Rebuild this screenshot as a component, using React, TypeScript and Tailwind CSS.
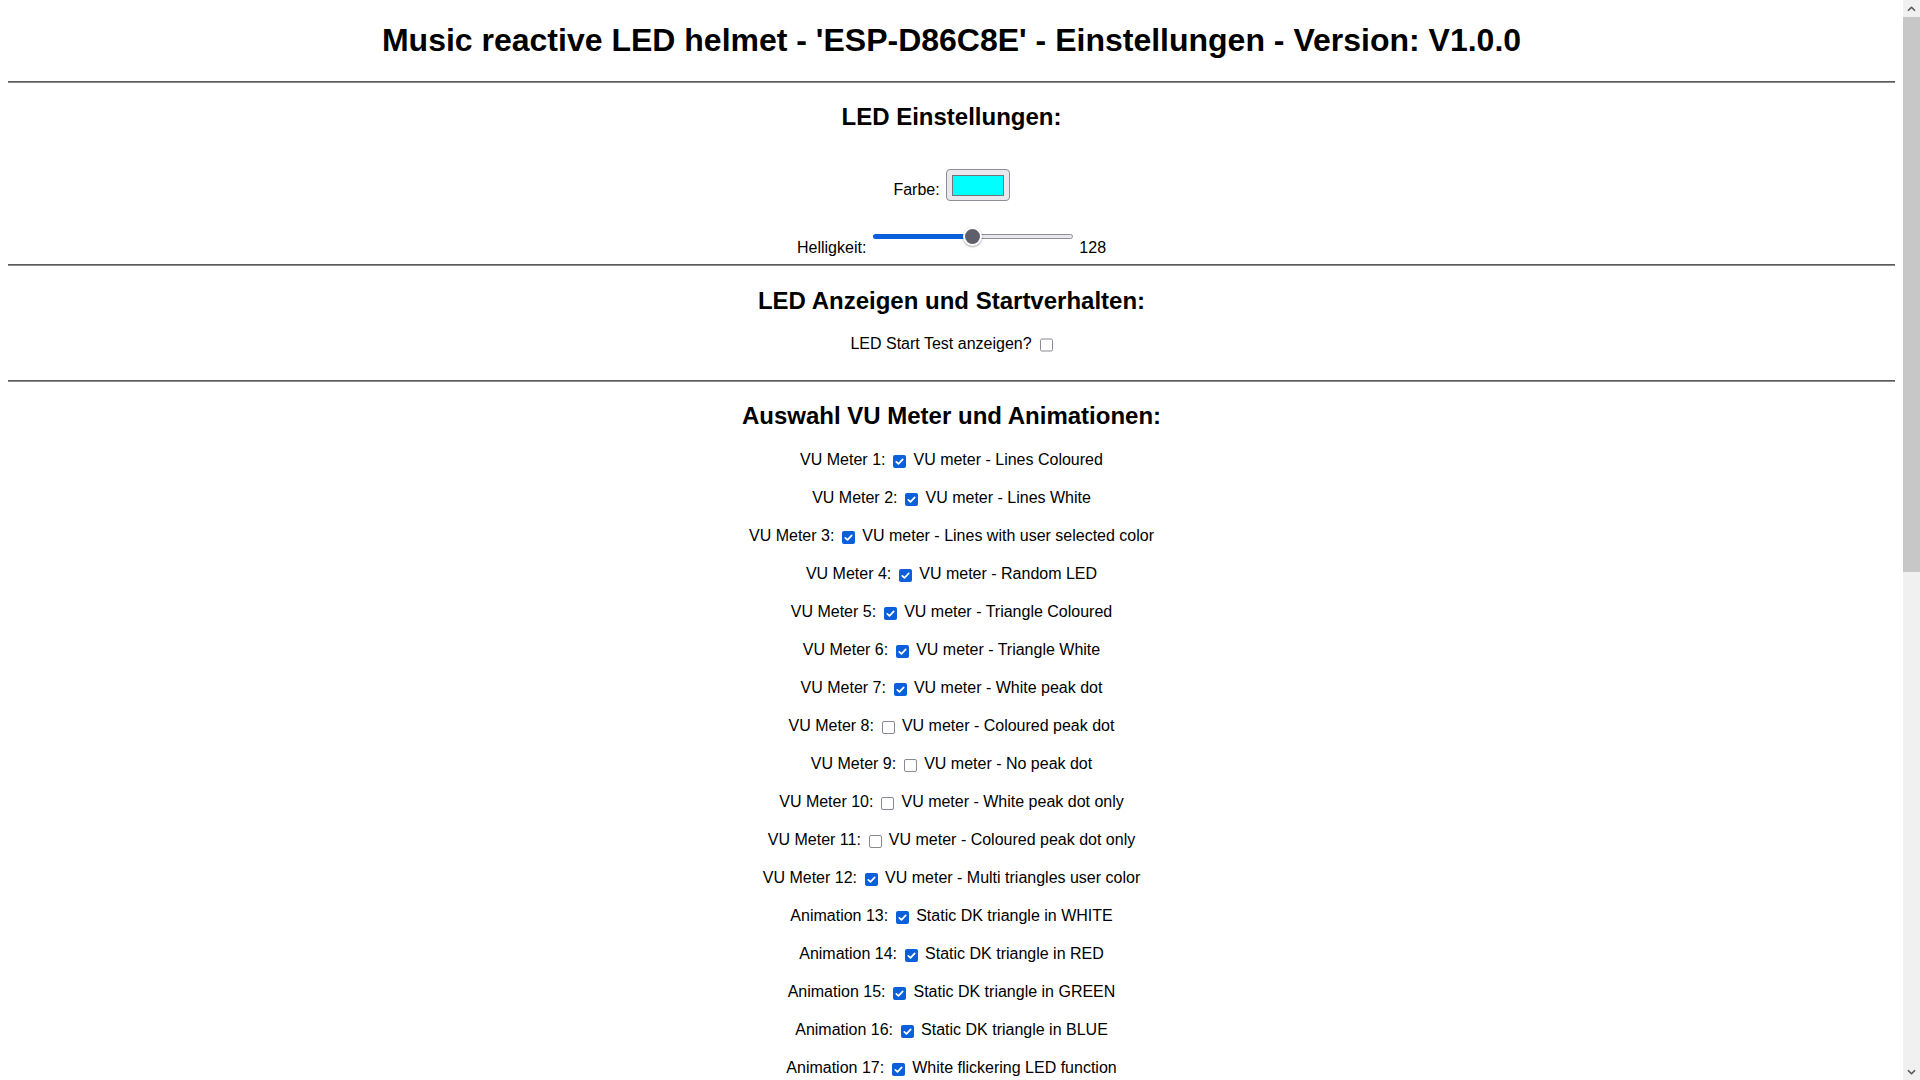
const vuRows: { label: string; checked: boolean; text: string }[] = [
  { label: "VU Meter 1:", checked: true, text: "VU meter - Lines Coloured" },
  { label: "VU Meter 2:", checked: true, text: "VU meter - Lines White" },
  { label: "VU Meter 3:", checked: true, text: "VU meter - Lines with user selected color" },
  { label: "VU Meter 4:", checked: true, text: "VU meter - Random LED" },
  { label: "VU Meter 5:", checked: true, text: "VU meter - Triangle Coloured" },
  { label: "VU Meter 6:", checked: true, text: "VU meter - Triangle White" },
  { label: "VU Meter 7:", checked: true, text: "VU meter - White peak dot" },
  { label: "VU Meter 8:", checked: false, text: "VU meter - Coloured peak dot" },
  { label: "VU Meter 9:", checked: false, text: "VU meter - No peak dot" },
  { label: "VU Meter 10:", checked: false, text: "VU meter - White peak dot only" },
  { label: "VU Meter 11:", checked: false, text: "VU meter - Coloured peak dot only" },
  { label: "VU Meter 12:", checked: true, text: "VU meter - Multi triangles user color" },
  { label: "Animation 13:", checked: true, text: "Static DK triangle in WHITE" },
  { label: "Animation 14:", checked: true, text: "Static DK triangle in RED" },
  { label: "Animation 15:", checked: true, text: "Static DK triangle in GREEN" },
  { label: "Animation 16:", checked: true, text: "Static DK triangle in BLUE" },
  { label: "Animation 17:", checked: true, text: "White flickering LED function" },
  { label: "Animation 18:", checked: true, text: "Rainbow LED function" },
  { label: "Animation 19:", checked: false, text: "Fire LED function" },
];

function Rule() {
  return <div className="h-0 border-t border-b border-t-[#5c5c5c] border-b-[#8a8a8a]" />;
}

function Check({ checked }: { checked: boolean }) {
  if (checked) {
    return (
      <span className="flex h-[13px] w-[13px] items-center justify-center rounded-[2px] bg-[#0a5fdb]">
        <svg width="13" height="13" viewBox="0 0 13 13" fill="none">
          <path d="M3.3 6.8 L5.5 8.9 L9.7 4.4" stroke="white" strokeWidth="1.7" strokeLinecap="round" strokeLinejoin="round" />
        </svg>
      </span>
    );
  }
  return <span className="block h-[13px] w-[13px] rounded-[2px] border-[1.5px] border-[#8b8795] bg-white" />;
}

function Slider() {
  return (
    <div className="relative mb-[11px] ml-[7px] flex h-[20px] w-[200px] items-center">
      <div className="flex h-[5px] w-full">
        <div className="w-[100px] rounded-l-full bg-[#0a5fdb]" />
        <div className="flex-1 rounded-r-full border border-[#8f8d98] bg-[#e9e9ed]" />
      </div>
      <div className="absolute left-[90px] top-[0.5px] h-[19px] w-[19px] rounded-full border-2 border-white bg-[#5f5e6b] shadow-[0_1px_2px_rgba(0,0,0,0.35)]" />
    </div>
  );
}

function Chevron({ down }: { down?: boolean }) {
  return (
    <div className="flex h-[17px] items-center justify-center">
      <svg width="9" height="6" viewBox="0 0 9 6" fill="none">
        <path
          d={down ? "M1 1.2 L4.5 4.7 L8 1.2" : "M1 4.8 L4.5 1.3 L8 4.8"}
          stroke="#555"
          strokeWidth="1.6"
          strokeLinejoin="round"
        />
      </svg>
    </div>
  );
}

export default function App() {
  return (
    <div className="flex h-screen overflow-hidden bg-white font-['Liberation_Sans',Arial,sans-serif] text-black">
      <main className="flex-1 overflow-hidden px-2">
        <h1 className="mt-[22px] mb-[22px] text-center text-[32px] font-bold leading-[37px]">
          Music reactive LED helmet - 'ESP-D86C8E' - Einstellungen - Version: V1.0.0
        </h1>
        <Rule />

        <h2 className="mt-[20px] text-center text-[24px] font-bold leading-[28px]">LED Einstellungen:</h2>
        <div className="mt-[38px] flex items-end justify-center text-[16px] leading-[18px]">
          <span className="mb-[2px]">Farbe:</span>
          <div className="ml-[6px] h-[32px] w-[64px] rounded-[4px] border border-[#8f8d96] bg-[#e9e9ed] px-[5px] py-[4.5px]">
            <div className="h-full w-full border border-[#77737d] bg-[#00ffff]" />
          </div>
        </div>
        <div className="mt-[25px] flex items-end justify-center text-[16px] leading-[18px]">
          <span>Helligkeit:</span>
          <Slider />
          <span className="ml-[6px]">128</span>
        </div>
        <div className="mt-[7px]">
          <Rule />
        </div>

        <h2 className="mt-[21px] text-center text-[24px] font-bold leading-[28px]">LED Anzeigen und Startverhalten:</h2>
        <div className="mt-[20px] flex h-[18px] items-center justify-center text-[16px] leading-[18px]">
          <span>LED Start Test anzeigen?</span>
          <span className="ml-[8px] translate-y-[0.5px]">
            <Check checked={false} />
          </span>
        </div>
        <div className="mt-[27px]">
          <Rule />
        </div>

        <h2 className="mt-[20px] text-center text-[24px] font-bold leading-[28px]">Auswahl VU Meter und Animationen:</h2>
        <div className="mt-[19px] flex flex-col gap-[16px] text-[16px] leading-[18px]">
          {vuRows.map((r) => (
            <div key={r.label} className="flex h-[22px] items-center justify-center">
              <span>{r.label}</span>
              <span className="ml-[8px] mr-[7px] translate-y-[1px]">
                <Check checked={r.checked} />
              </span>
              <span>{r.text}</span>
            </div>
          ))}
        </div>
      </main>

      <aside className="flex w-[17px] flex-col bg-[#f0f0f0]">
        <Chevron />
        <div className="h-[555px] bg-[#c7c7c7]" />
        <div className="flex-1" />
        <Chevron down />
      </aside>
    </div>
  );
}
